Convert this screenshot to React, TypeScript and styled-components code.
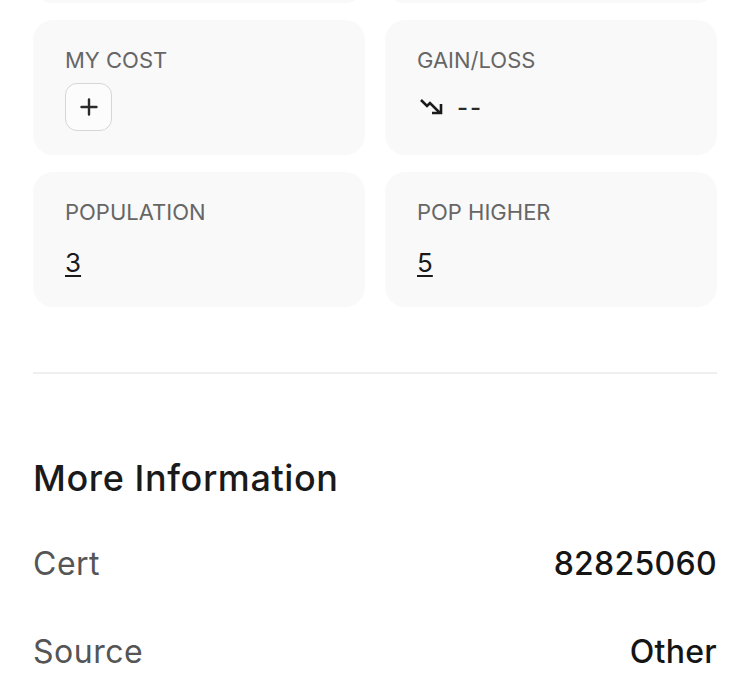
import React from "react";
import styled, { createGlobalStyle } from "styled-components";

const Global = createGlobalStyle`
  html, body { margin: 0; padding: 0; background: #ffffff; }
  body { font-family: Inter, "Noto Sans", "Liberation Sans", sans-serif; overflow: hidden; }
`;

const Page = styled.div`
  width: 750px;
  height: 688px;
  overflow: hidden;
  box-sizing: border-box;
  padding: 0 33px;
`;

const Grid = styled.div`
  display: grid;
  grid-template-columns: 1fr 1fr;
  column-gap: 20px;
  row-gap: 17px;
  margin-top: -132px;
`;

const Card = styled.div`
  height: 135px;
  box-sizing: border-box;
  padding: 27px 32px 0;
  background: #f9f9fa;
  border-radius: 20px;
  display: flex;
  flex-direction: column;
  gap: 10px;
`;

const Label = styled.div`
  font-size: 22px;
  line-height: 26px;
  color: #666666;
  letter-spacing: 0;
`;

const AddButton = styled.button`
  width: 47px;
  height: 48px;
  box-sizing: border-box;
  border: 1.5px solid #d6d6d6;
  border-radius: 12px;
  background: #fcfcfc;
  display: flex;
  align-items: center;
  justify-content: center;
  padding: 0;
  color: #2a2a2a;
`;

const TrendRow = styled.div`
  height: 47px;
  display: flex;
  align-items: center;
  gap: 12px;
  padding-left: 2px;
`;

const Dashes = styled.span`
  font-size: 24px;
  font-weight: 500;
  color: #2a2a2a;
  letter-spacing: 2px;
  margin-top: 2px;
`;

const LinkValue = styled.a`
  margin-top: 13px;
  font-size: 26px;
  line-height: 30px;
  color: #1a1a1a;
  text-decoration: underline;
  text-underline-offset: 3px;
  text-decoration-thickness: 1.5px;
  align-self: flex-start;
`;

const Divider = styled.hr`
  margin: 65px 0 0;
  border: none;
  height: 2px;
  background: #efefef;
`;

const Heading = styled.h2`
  margin: 84px 0 0;
  font-size: 36px;
  line-height: 41px;
  font-weight: 500;
  letter-spacing: 0.6px;
  color: #1a1a1a;
`;

const InfoList = styled.div`
  margin-top: 47px;
  display: flex;
  flex-direction: column;
  gap: 52px;
`;

const InfoRow = styled.div`
  display: flex;
  justify-content: space-between;
  align-items: baseline;
  font-size: 32px;
  line-height: 36px;
`;

const InfoKey = styled.span`
  color: #555555;
  font-weight: 400;
  letter-spacing: 0.5px;
`;

const InfoValue = styled.span`
  color: #151515;
  font-weight: 500;
  letter-spacing: 0.3px;
`;

const PlusIcon = () => (
  <svg width="18" height="18" viewBox="0 0 18 18" fill="none" stroke="currentColor" strokeWidth="2.4" strokeLinecap="round">
    <path d="M9 1.5v15M1.5 9h15" />
  </svg>
);

const TrendDownIcon = () => (
  <svg width="26" height="18" viewBox="0 0 26 18" fill="none" stroke="#1a1a1a" strokeWidth="2.6" strokeLinecap="butt" strokeLinejoin="miter">
    <path d="M2 2l6 6 3-3 10 10" />
    <path d="M13 15h9V6" />
  </svg>
);

const info = [
  { k: "Cert", v: "82825060" },
  { k: "Source", v: "Other" },
];

export default function App() {
  return (
    <>
      <Global />
      <Page>
        <Grid>
          <Card />
          <Card />
          <Card>
            <Label>MY COST</Label>
            <AddButton aria-label="Add cost">
              <PlusIcon />
            </AddButton>
          </Card>
          <Card>
            <Label>GAIN/LOSS</Label>
            <TrendRow>
              <TrendDownIcon />
              <Dashes>--</Dashes>
            </TrendRow>
          </Card>
          <Card>
            <Label>POPULATION</Label>
            <LinkValue>3</LinkValue>
          </Card>
          <Card>
            <Label>POP HIGHER</Label>
            <LinkValue>5</LinkValue>
          </Card>
        </Grid>
        <Divider />
        <Heading>More Information</Heading>
        <InfoList>
          {info.map((r) => (
            <InfoRow key={r.k}>
              <InfoKey>{r.k}</InfoKey>
              <InfoValue>{r.v}</InfoValue>
            </InfoRow>
          ))}
        </InfoList>
      </Page>
    </>
  );
}
